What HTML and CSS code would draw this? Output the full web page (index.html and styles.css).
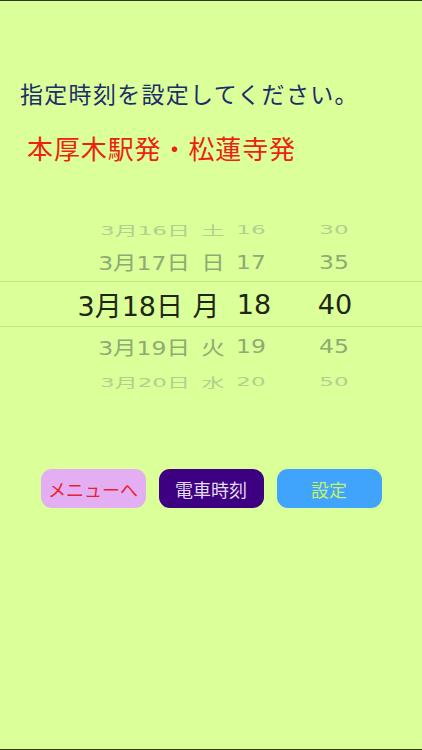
FILE: index.html
```html
<!DOCTYPE html>
<html lang="ja">
<head>
<meta charset="utf-8">
<title>指定時刻</title>
<link rel="stylesheet" href="styles.css">
</head>
<body>
<div class="screen">
  <p class="prompt">指定時刻を設定してください。</p>
  <p class="route">本厚木駅発・松蓮寺発</p>

  <div class="picker">
    <div class="row far"><span class="date">3月16日</span><span class="wd">土</span><span class="hr">16</span><span class="mn">30</span></div>
    <div class="row near"><span class="date">3月17日</span><span class="wd">日</span><span class="hr">17</span><span class="mn">35</span></div>
    <div class="row sel"><span class="date">3月18日</span><span class="wd">月</span><span class="hr">18</span><span class="mn">40</span></div>
    <div class="row near"><span class="date">3月19日</span><span class="wd">火</span><span class="hr">19</span><span class="mn">45</span></div>
    <div class="row far"><span class="date">3月20日</span><span class="wd">水</span><span class="hr">20</span><span class="mn">50</span></div>
  </div>

  <div class="buttons">
    <button class="btn btn-menu">メニューへ</button>
    <button class="btn btn-train">電車時刻</button>
    <button class="btn btn-set">設定</button>
  </div>
</div>
</body>
</html>
```

FILE: styles.css
```css
html, body {
  margin: 0;
  padding: 0;
}

body {
  background: #dbff99;
  font-family: "Noto Sans CJK JP", "Noto Sans", sans-serif;
}

.screen {
  box-sizing: border-box;
  width: 422px;
  height: 750px;
  border-top: 1px solid #2e3a16;
  border-bottom: 1px solid #2e3a16;
  background: #dbff99;
  overflow: hidden;
}

.prompt {
  margin: 78px 0 0 20px;
  font-size: 23px;
  line-height: 28px;
  color: #1c2c6c;
  letter-spacing: 1.3px;
  white-space: nowrap;
}

.route {
  margin: 25px 0 0 27px;
  font-size: 26px;
  line-height: 32px;
  color: #ec2310;
  letter-spacing: 0.9px;
  white-space: nowrap;
}

.picker {
  margin-top: 49px;
  display: flex;
  flex-direction: column;
  font-family: "DejaVu Sans", "Noto Sans CJK JP", sans-serif;
}

.row {
  display: grid;
  grid-template-columns: 190px 46px 30px 34px 68px;
  align-items: center;
  white-space: nowrap;
}

.row span {
  display: block;
  text-align: center;
}

.row .date {
  text-align: right;
}

.row .mn {
  grid-column: 5;
}

.row.far {
  height: 30px;
  font-size: 23px;
  color: #b3cf8d;
  transform: scaleY(0.55);
}

.row.near {
  height: 38px;
  font-size: 23.5px;
  color: #8dab72;
  transform: scaleY(0.82);
}

.row.near:nth-child(4) {
  height: 39px;
}

.row.far:last-child {
  height: 28px;
}

.row.sel {
  box-sizing: border-box;
  height: 46px;
  font-size: 27px;
  color: #1d2714;
  border-top: 1px solid #c3e388;
  border-bottom: 1px solid #c3e388;
  grid-template-columns: 183px 46px 50px 21px 70px;
}

.buttons {
  margin-top: 75px;
  display: flex;
  justify-content: center;
  gap: 13px;
}

.btn {
  width: 105px;
  height: 39px;
  border: none;
  border-radius: 11px;
  font-family: "Noto Sans CJK JP", sans-serif;
  font-size: 18px;
  padding: 0;
}

.btn-menu {
  background: #e3aff2;
  color: #ea1e33;
}

.btn-train {
  background: #3c0080;
  color: #e2dcf2;
}

.btn-set {
  background: #40a4fd;
  color: #c4f06c;
}
```
